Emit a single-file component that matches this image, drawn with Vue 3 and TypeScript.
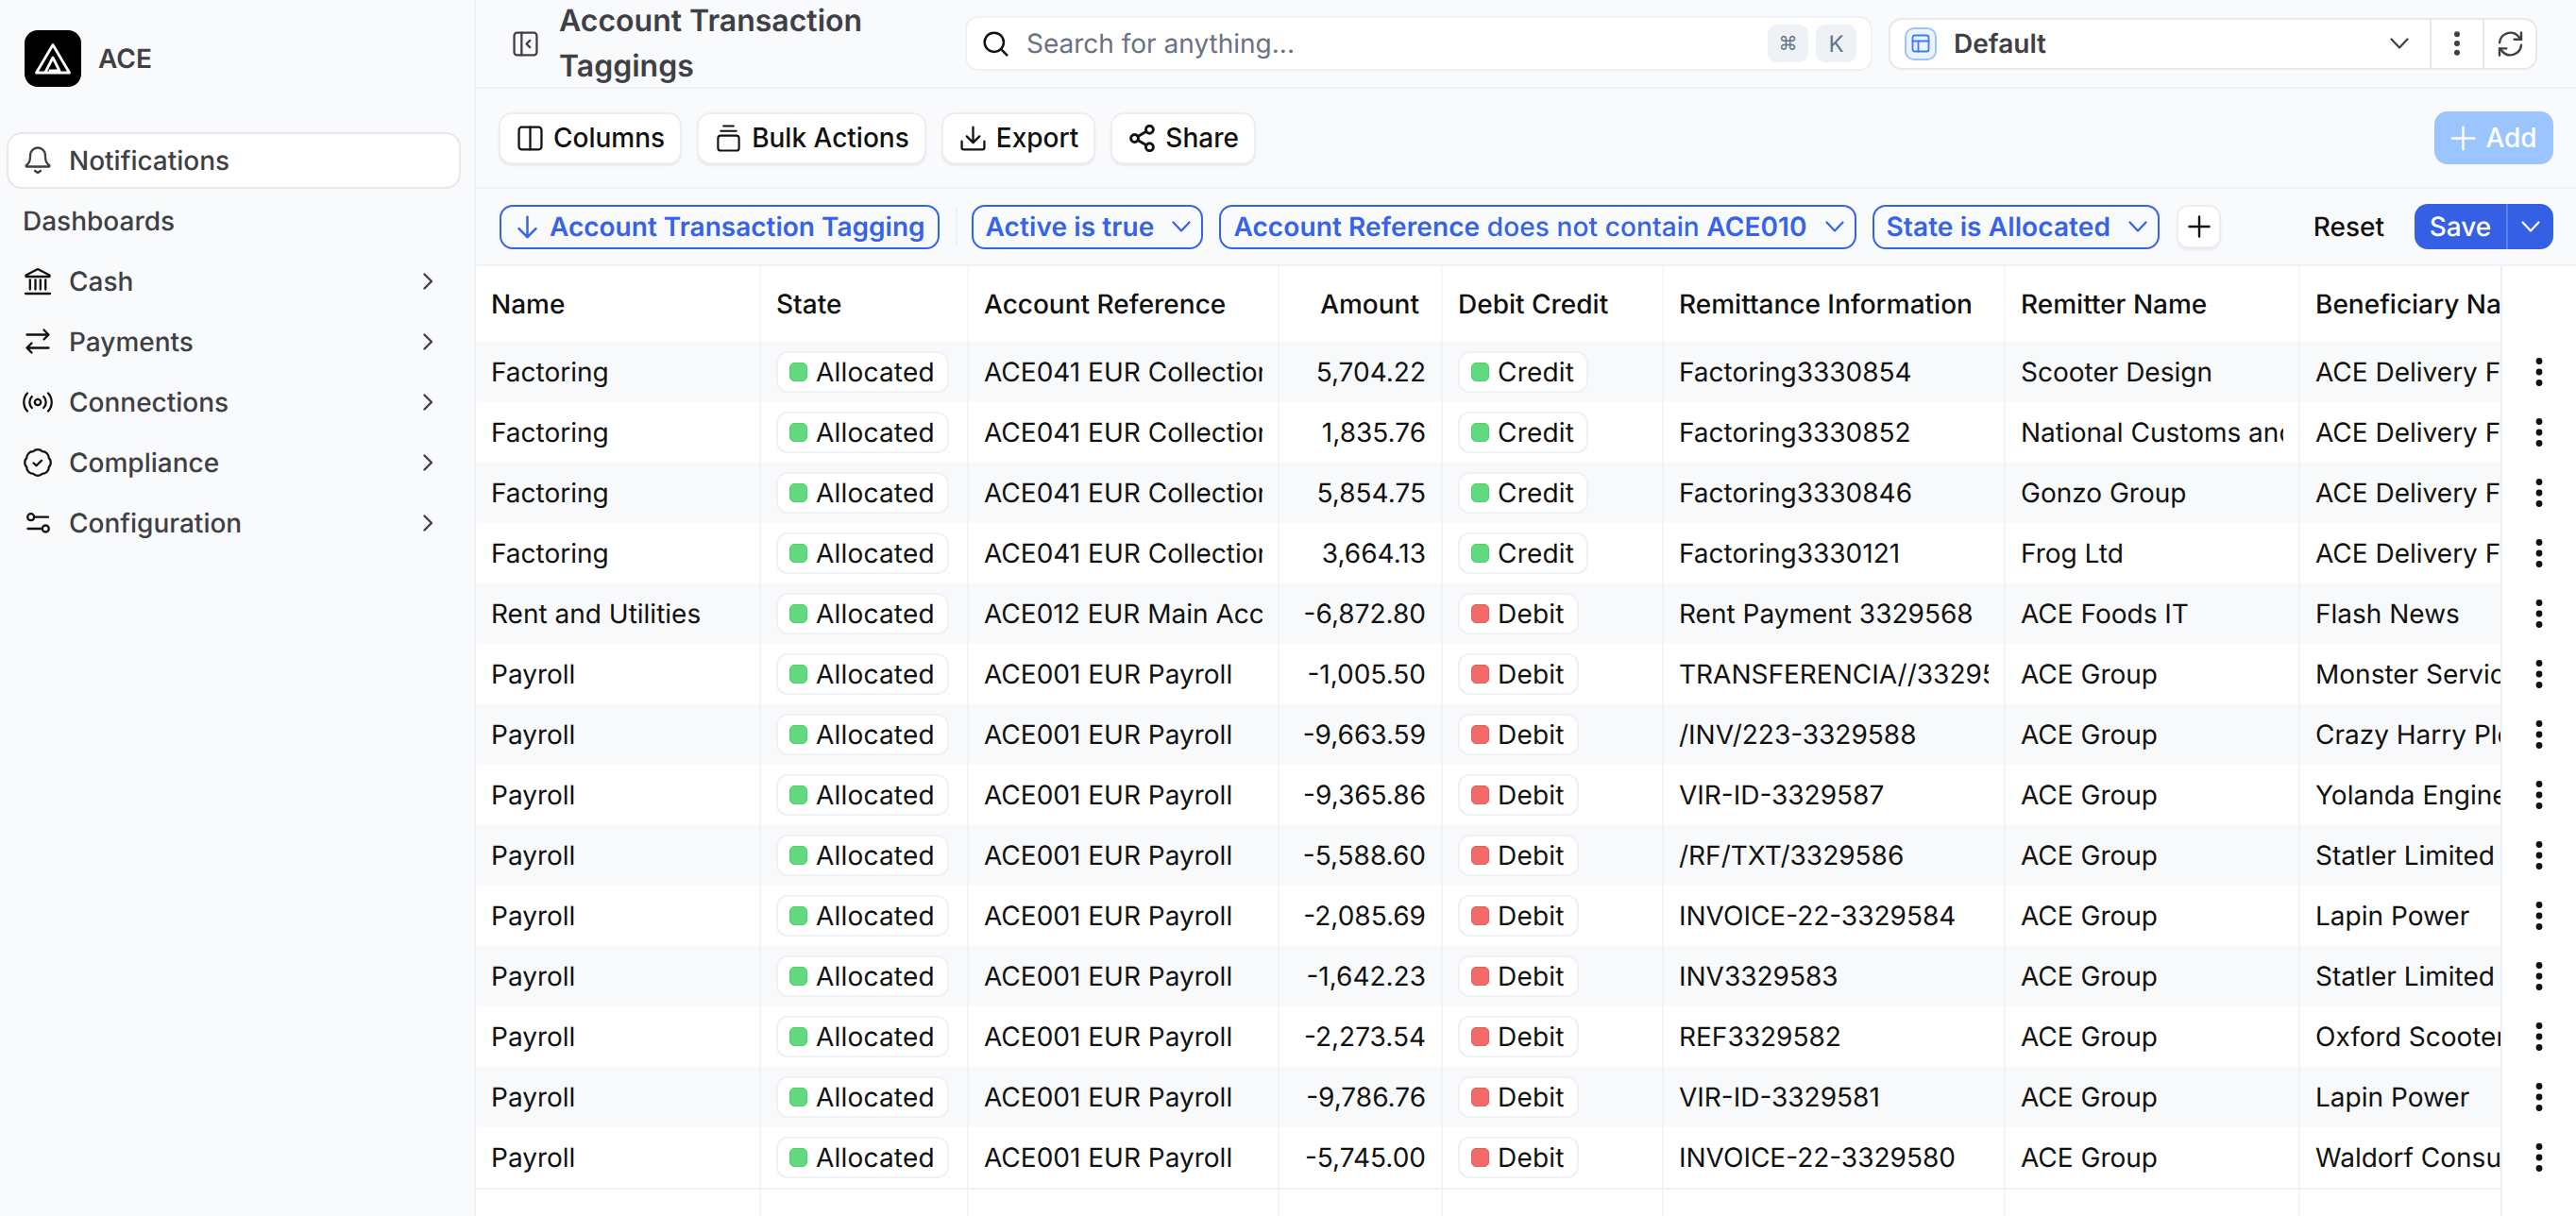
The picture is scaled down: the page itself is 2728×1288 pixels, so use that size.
<script setup lang="ts">
interface NavItem { label: string; icon: string }
interface Row { name: string; account: string; amount: string; kind: 'Credit' | 'Debit'; info: string; remitter: string; beneficiary: string }

const nav: NavItem[] = [
  { label: 'Cash', icon: '<path d="M3.500 9.500 16 3l12.500 6.500v1.500h-25z"/><path d="M7.800 14.500v10M13.500 14.500v10M18.800 14.500v10M24.200 14.500v10"/><path d="M3 29h26"/>' },
  { label: 'Payments', icon: '<path d="M4.500 8.500h23M22.500 3.500l5 5-5 5"/><path d="M27.500 22.500h-23M9.500 17.500l-5 5 5 5"/>' },
  { label: 'Connections', icon: '<circle cx="16" cy="16" r="3.200"/><path d="M9.800 10a8.500 8.500 0 0 0 0 12M22.200 10a8.500 8.500 0 0 1 0 12"/><path d="M5 6.500a14 14 0 0 0 0 19M27 6.500a14 14 0 0 1 0 19"/>' },
  { label: 'Compliance', icon: '<path d="M27.800 11.100a7 7 0 0 1 0 9.800 7 7 0 0 1-6.900 6.900 7 7 0 0 1-9.800 0 7 7 0 0 1-6.900-6.900 7 7 0 0 1 0-9.800 7 7 0 0 1 6.900-6.900 7 7 0 0 1 9.800 0 7 7 0 0 1 6.900 6.900Z"/><path d="m11.500 16.500 3 2.700 5.500-5.500"/>' },
  { label: 'Configuration', icon: '<circle cx="8.700" cy="9.700" r="3.500"/><path d="M12.500 9.700H27"/><circle cx="24.300" cy="22" r="3.500"/><path d="M5.500 22h15"/>' }
]

const accA = 'ACE041 EUR Collections Account'
const accP = 'ACE001 EUR Payroll'
const rows: Row[] = [
  { name: 'Factoring', account: accA, amount: '5,704.22', kind: 'Credit', info: 'Factoring3330854', remitter: 'Scooter Design', beneficiary: 'ACE Delivery France' },
  { name: 'Factoring', account: accA, amount: '1,835.76', kind: 'Credit', info: 'Factoring3330852', remitter: 'National Customs and Excise', beneficiary: 'ACE Delivery France' },
  { name: 'Factoring', account: accA, amount: '5,854.75', kind: 'Credit', info: 'Factoring3330846', remitter: 'Gonzo Group', beneficiary: 'ACE Delivery France' },
  { name: 'Factoring', account: accA, amount: '3,664.13', kind: 'Credit', info: 'Factoring3330121', remitter: 'Frog Ltd', beneficiary: 'ACE Delivery France' },
  { name: 'Rent and Utilities', account: 'ACE012 EUR Main Account', amount: '-6,872.80', kind: 'Debit', info: 'Rent Payment 3329568', remitter: 'ACE Foods IT', beneficiary: 'Flash News' },
  { name: 'Payroll', account: accP, amount: '-1,005.50', kind: 'Debit', info: 'TRANSFERENCIA//3329589', remitter: 'ACE Group', beneficiary: 'Monster Services' },
  { name: 'Payroll', account: accP, amount: '-9,663.59', kind: 'Debit', info: '/INV/223-3329588', remitter: 'ACE Group', beneficiary: 'Crazy Harry Plc' },
  { name: 'Payroll', account: accP, amount: '-9,365.86', kind: 'Debit', info: 'VIR-ID-3329587', remitter: 'ACE Group', beneficiary: 'Yolanda Engineering' },
  { name: 'Payroll', account: accP, amount: '-5,588.60', kind: 'Debit', info: '/RF/TXT/3329586', remitter: 'ACE Group', beneficiary: 'Statler Limited' },
  { name: 'Payroll', account: accP, amount: '-2,085.69', kind: 'Debit', info: 'INVOICE-22-3329584', remitter: 'ACE Group', beneficiary: 'Lapin Power' },
  { name: 'Payroll', account: accP, amount: '-1,642.23', kind: 'Debit', info: 'INV3329583', remitter: 'ACE Group', beneficiary: 'Statler Limited' },
  { name: 'Payroll', account: accP, amount: '-2,273.54', kind: 'Debit', info: 'REF3329582', remitter: 'ACE Group', beneficiary: 'Oxford Scooters' },
  { name: 'Payroll', account: accP, amount: '-9,786.76', kind: 'Debit', info: 'VIR-ID-3329581', remitter: 'ACE Group', beneficiary: 'Lapin Power' },
  { name: 'Payroll', account: accP, amount: '-5,745.00', kind: 'Debit', info: 'INVOICE-22-3329580', remitter: 'ACE Group', beneficiary: 'Waldorf Consulting' }
]
</script>

<template>
  <div class="app">
    <aside class="sidebar">
      <div class="brand">
        <svg class="logo" viewBox="0 0 60 60">
          <rect width="60" height="60" rx="14" fill="#000" />
          <path d="M30 15.500 12.500 45h35z" fill="none" stroke="#fff" stroke-width="2.800" />
          <path d="M22 44.500 30 29l7 14h-10" fill="none" stroke="#fff" stroke-width="2.800" />
        </svg>
        <span>ACE</span>
      </div>
      <nav class="nav">
        <a class="nav-item active">
          <svg class="ic" viewBox="0 0 32 32">
            <path d="M4 21c2-1.500 4-3 4-8.500v-2a8 8 0 0 1 16 0v2c0 5.500 2 7 4 8.500.8.600.4 1.500-.5 1.500h-23c-.9 0-1.300-.9-.5-1.500Z" />
            <path d="m13 27 3 2 3-2" />
          </svg>
          <span>Notifications</span>
        </a>
        <a class="nav-item plain"><span>Dashboards</span></a>
        <a v-for="item in nav" :key="item.label" class="nav-item">
          <svg class="ic dark" viewBox="0 0 32 32" v-html="item.icon" />
          <span class="grow">{{ item.label }}</span>
          <svg class="chev" viewBox="0 0 24 24"><path d="m8.500 4.500 7.500 7.500-7.500 7.500" /></svg>
        </a>
      </nav>
    </aside>

    <main class="main">
      <header class="topbar">
        <button class="collapse" aria-label="Collapse">
          <svg class="tool" viewBox="0 0 26 26"><rect x="1.500" y="1.500" width="23" height="23" rx="3" /><path d="M9 1.500v23M17.500 9.500 14 13l3.500 3.500" /></svg>
        </button>
        <h1 class="title">Account Transaction Taggings</h1>
        <div class="search">
          <svg class="tool black" viewBox="0 0 24 24"><circle cx="10.500" cy="10.500" r="9" /><path d="m17 17 5.500 5.500" /></svg>
          <span class="placeholder">Search for anything...</span>
          <kbd class="key sym">⌘</kbd>
          <kbd class="key">K</kbd>
        </div>
        <div class="view">
          <div class="view-main">
            <span class="view-icon">
              <svg viewBox="0 0 20 20"><rect x="1.500" y="1.500" width="17" height="17" rx="2" /><path d="M1.500 7.500h17M7.500 7.500v11" /></svg>
            </span>
            <span class="view-name">Default</span>
            <svg class="small-chev" viewBox="0 0 24 24"><path d="m3.500 7.500 8.500 9 8.500-9" /></svg>
          </div>
          <button class="view-btn" aria-label="More">
            <svg class="dots" viewBox="0 0 8 32"><circle cx="4" cy="6.300" r="3" /><circle cx="4" cy="16" r="3" /><circle cx="4" cy="25.700" r="3" /></svg>
          </button>
          <button class="view-btn" aria-label="Refresh">
            <svg class="refresh" viewBox="0 0 24 24"><path d="M2.500 11a9.500 9.500 0 0 1 16.600-5.500L21.500 8" /><path d="M21.500 2v6h-6" /><path d="M21.500 13a9.500 9.500 0 0 1-16.600 5.500L2.500 16" /><path d="M8.500 16h-6v6" /></svg>
          </button>
        </div>
      </header>

      <section class="toolbar">
        <button class="btn">
          <svg class="tool black" viewBox="0 0 26 26"><rect x="1.500" y="1.500" width="23" height="23" rx="3" /><path d="M13 1.500v23" /></svg>
          Columns
        </button>
        <button class="btn">
          <svg class="tool black tall" viewBox="0 0 26 30"><rect x="1.500" y="12" width="23" height="16.500" rx="3" /><path d="M4.500 7h17M7.500 1.500h11" /></svg>
          Bulk Actions
        </button>
        <button class="btn">
          <svg class="tool black" viewBox="0 0 26 26"><path d="M1.500 16v6.500a2 2 0 0 0 2 2h19a2 2 0 0 0 2-2V16" /><path d="M13 1.500V17M6.500 11l6.500 6.500 6.500-6.500" /></svg>
          Export
        </button>
        <button class="btn">
          <svg class="tool black tall" viewBox="2 1 20 22"><circle cx="18" cy="5" r="3" /><circle cx="6" cy="12" r="3" /><circle cx="18" cy="19" r="3" /><path d="m8.600 13.500 6.800 4M15.400 6.500l-6.800 4" /></svg>
          Share
        </button>
        <button class="add">
          <svg class="tool white" viewBox="0 0 24 24"><path d="M12 1.500v21M1.500 12h21" /></svg>
          Add
        </button>
      </section>

      <section class="filters">
        <span class="pill sort">
          <svg class="tool blue" viewBox="0 0 24 24"><path d="M12 2.500v19M4 13.500l8 8 8-8" /></svg>
          Account Transaction Tagging
        </span>
        <i class="sep"></i>
        <span class="pill">
          <b>Active is true</b>
          <svg class="small-chev blue" viewBox="0 0 24 24"><path d="m3.500 7.500 8.500 9 8.500-9" /></svg>
        </span>
        <span class="pill">
          <span><b>Account Reference</b> does not contain <b>ACE010</b></span>
          <svg class="small-chev blue" viewBox="0 0 24 24"><path d="m3.500 7.500 8.500 9 8.500-9" /></svg>
        </span>
        <span class="pill">
          <b>State is Allocated</b>
          <svg class="small-chev blue" viewBox="0 0 24 24"><path d="m3.500 7.500 8.500 9 8.500-9" /></svg>
        </span>
        <button class="plus" aria-label="Add filter">
          <svg viewBox="0 0 24 24"><path d="M12 1.500v21M1.500 12h21" /></svg>
        </button>
        <span class="reset">Reset</span>
        <div class="save">
          <span class="save-label">Save</span>
          <span class="save-more">
            <svg class="small-chev white" viewBox="0 0 24 24"><path d="m3.500 7.500 8.500 9 8.500-9" /></svg>
          </span>
        </div>
      </section>

      <section class="table-wrap">
        <div class="table">
          <div class="row head">
            <div class="cell"><span class="txt">Name</span></div>
            <div class="cell"><span class="txt">State</span></div>
            <div class="cell"><span class="txt">Account Reference</span></div>
            <div class="cell right head-amount"><span class="txt">Amount</span></div>
            <div class="cell"><span class="txt">Debit Credit</span></div>
            <div class="cell"><span class="txt">Remittance Information</span></div>
            <div class="cell"><span class="txt">Remitter Name</span></div>
            <div class="cell last"><span class="txt">Beneficiary Name</span></div>
          </div>
          <div v-for="(r, i) in rows" :key="i" class="row" :class="{ stripe: i % 2 === 0 }">
            <div class="cell"><span class="txt">{{ r.name }}</span></div>
            <div class="cell"><span class="tag"><i class="dot green"></i>Allocated</span></div>
            <div class="cell"><span class="txt">{{ r.account }}</span></div>
            <div class="cell right"><span class="txt">{{ r.amount }}</span></div>
            <div class="cell"><span class="tag"><i class="dot" :class="r.kind === 'Credit' ? 'green' : 'red'"></i>{{ r.kind }}</span></div>
            <div class="cell"><span class="txt">{{ r.info }}</span></div>
            <div class="cell"><span class="txt">{{ r.remitter }}</span></div>
            <div class="cell last"><span class="txt">{{ r.beneficiary }}</span></div>
          </div>
          <div class="row filler">
            <div class="cell" v-for="n in 8" :key="n"></div>
          </div>
        </div>
        <div class="actions">
          <div class="action-head"></div>
          <div v-for="(r, i) in rows" :key="i" class="action">
            <svg class="dots black" viewBox="0 0 8 32"><circle cx="4" cy="4.500" r="3.400" /><circle cx="4" cy="16" r="3.400" /><circle cx="4" cy="27.500" r="3.400" /></svg>
          </div>
        </div>
      </section>
    </main>
  </div>
</template>

<style>
html, body { margin: 0; padding: 0; background: #f9fafc; }
</style>

<style scoped>
.app {
  display: flex;
  width: 2728px;
  height: 1288px;
  overflow: hidden;
  background: #f9fafc;
  font-family: Inter, "Liberation Sans", sans-serif;
  font-size: 28px;
  color: #111;
  text-rendering: geometricPrecision;
}
button { font: inherit; color: inherit; background: none; border: 0; padding: 0; }
svg { display: block; flex: none; fill: none; stroke-linecap: round; stroke-linejoin: round; }

.sidebar {
  width: 504px;
  flex: none;
  box-sizing: border-box;
  border-right: 2px solid #eef1f6;
  padding: 32px 14px 0 7px;
  color: #3f3f46;
}
.brand { display: flex; align-items: center; gap: 18px; padding-left: 19px; font-weight: 600; }
.logo { width: 60px; height: 60px; }
.nav { margin-top: 48px; display: flex; flex-direction: column; gap: 4px; }
.nav-item {
  display: flex;
  align-items: center;
  height: 60px;
  box-sizing: border-box;
  padding: 0 20px 0 15px;
  gap: 17px;
  font-weight: 500;
  border: 2px solid transparent;
  border-radius: 16px;
}
.nav-item.active { background: #fff; border-color: #e7e8ee; }
.nav-item.plain { padding-left: 15px; }
.grow { flex: 1; }
.ic { width: 32px; height: 32px; stroke: #3f3f46; stroke-width: 2.300; }
.ic.dark { stroke: #111; }
.chev { width: 24px; height: 24px; stroke: #3f3f46; stroke-width: 2.400; margin-right: 1px; }

.tool { width: 27px; height: 27px; stroke: #3f3f46; stroke-width: 2.200; }
.tool.tall { height: 29px; }
.tool.black { stroke: #111; }
.tool.white { stroke: #fff; }
.tool.blue { stroke: #3563e9; }

.main { flex: 1; min-width: 0; display: flex; flex-direction: column; }

.topbar {
  height: 94px;
  flex: none;
  box-sizing: border-box;
  border-bottom: 2px solid #eef1f6;
  display: flex;
  align-items: center;
  padding: 0 41px 0 39px;
}
.collapse { width: 27px; margin-right: 22px; }
.title {
  margin: 0;
  width: 430px;
  flex: none;
  font-size: 32px;
  font-weight: 600;
  line-height: 48px;
  color: #3f3f46;
}
.search {
  width: 961px;
  flex: none;
  height: 58px;
  box-sizing: border-box;
  display: flex;
  align-items: center;
  gap: 8px;
  background: #fff;
  border: 2px solid #eef1f6;
  border-radius: 14px;
  padding: 0 15px 0 17px;
}
.placeholder { flex: 1; margin-left: 11px; color: #6b7280; }
.key {
  width: 43px;
  height: 40px;
  display: flex;
  align-items: center;
  justify-content: center;
  background: #eef1f6;
  border-radius: 10px;
  font-family: Inter, sans-serif;
  font-size: 24px;
  color: #64748b;
}
.key.sym { font-family: "DejaVu Sans", sans-serif; font-size: 20px; }
.view {
  margin-left: 17px;
  flex: 1;
  height: 55px;
  box-sizing: border-box;
  display: flex;
  align-items: stretch;
  background: #fff;
  border: 2px solid #e7e8ee;
  border-radius: 14px;
}
.view-main { flex: 1; display: flex; align-items: center; padding: 0 20px 0 15px; gap: 18px; }
.view-icon {
  width: 34px;
  height: 35px;
  box-sizing: border-box;
  display: flex;
  align-items: center;
  justify-content: center;
  background: #ecf3ff;
  border: 2px solid #9cc4ff;
  border-radius: 10px;
}
.view-icon svg { width: 20px; height: 20px; stroke: #3b7bf6; stroke-width: 1.800; }
.view-name { flex: 1; font-weight: 600; color: #3f3f46; }
.small-chev { width: 24px; height: 24px; stroke: #3f3f46; stroke-width: 2.200; }
.small-chev.blue { stroke: #3563e9; }
.small-chev.white { stroke: #fff; }
.view-btn {
  width: 56px;
  border-left: 2px solid #e7e8ee;
  display: flex;
  align-items: center;
  justify-content: center;
}
.refresh { width: 29px; height: 29px; stroke: #3f3f46; stroke-width: 2; }
.dots { width: 8px; height: 32px; fill: #3f3f46; }
.dots.black { fill: #111; }

.toolbar {
  height: 106px;
  flex: none;
  box-sizing: border-box;
  border-bottom: 2px solid #eef1f6;
  display: flex;
  align-items: center;
  gap: 16px;
  padding: 0 24px;
}
.btn {
  height: 55px;
  display: flex;
  align-items: center;
  gap: 11px;
  box-sizing: border-box;
  padding: 0 16px 0 18px;
  background: #fff;
  border: 2px solid #eceef2;
  border-radius: 14px;
  box-shadow: 0 2px 2px rgba(20, 30, 50, 0.07);
  font-weight: 500;
}
.add {
  margin-left: auto;
  height: 56px;
  width: 126px;
  display: flex;
  align-items: center;
  justify-content: center;
  gap: 10px;
  background: #9cc4ff;
  color: #fff;
  border-radius: 14px;
  font-weight: 500;
}

.filters {
  height: 82px;
  flex: none;
  box-sizing: border-box;
  border-bottom: 2px solid #eef1f6;
  display: flex;
  align-items: center;
  gap: 17px;
  padding: 0 24px 0 25px;
}
.pill {
  height: 47px;
  box-sizing: border-box;
  display: flex;
  align-items: center;
  gap: 17px;
  padding: 0 9px 0 13px;
  color: #3563e9;
  border: 2px solid #3563e9;
  border-radius: 14px;
  font-weight: 500;
  letter-spacing: 0.1px;
}
.pill b { font-weight: 600; }
.sort { font-weight: 600; padding: 0 13px 0 14px; gap: 10px; letter-spacing: 0; }
.sep { width: 2px; height: 40px; background: #eef1f6; margin-right: -2px; }
.plus {
  width: 47px;
  height: 46px;
  margin-left: 1px;
  display: flex;
  align-items: center;
  justify-content: center;
  background: #fff;
  border: 2px solid #eceef2;
  border-radius: 12px;
  box-shadow: 0 2px 2px rgba(20, 30, 50, 0.07);
  box-sizing: border-box;
}
.plus svg { width: 24px; height: 24px; stroke: #111; stroke-width: 2.400; }
.reset { margin-left: auto; font-weight: 500; margin-right: 15px; }
.save { display: flex; height: 48px; border-radius: 14px; overflow: hidden; background: #3560e3; color: #fff; font-weight: 500; }
.save-label { width: 97px; display: flex; align-items: center; justify-content: center; }
.save-more { width: 50px; border-left: 2px solid #5c80ea; box-sizing: border-box; display: flex; align-items: center; justify-content: center; }

.table-wrap { flex: 1; min-height: 0; display: flex; background: #fff; }
.table { flex: 1; min-width: 0; overflow: hidden; display: flex; flex-direction: column; }
.row {
  display: grid;
  grid-template-columns: 302px 220px 329px 173px 234px 362px 312px 300px;
  width: 2232px;
  height: 64px;
  flex: none;
}
.row.stripe { background: #f8f9fb; }
.row.head { height: 80px; font-weight: 500; }
.row.filler { flex: 1; height: auto; border-top: 2px solid #eef1f6; }
.cell {
  min-width: 0;
  box-sizing: border-box;
  border-right: 2px solid #f0f3f7;
  padding: 0 16px;
  display: flex;
  align-items: center;
  white-space: nowrap;
}
.row.head .cell { border-right-color: #f6f7fa; }
.txt { overflow: hidden; min-width: 0; line-height: 40px; }
.right { justify-content: flex-end; }
.head-amount { padding-right: 23px; }
.tag {
  height: 44px;
  box-sizing: border-box;
  display: inline-flex;
  align-items: center;
  gap: 9px;
  padding: 0 13px 0 12px;
  background: #fff;
  border: 2px solid #eef1f6;
  border-radius: 12px;
  letter-spacing: 0.2px;
}
.dot { width: 19px; height: 20px; box-sizing: border-box; border-radius: 5px; }
.dot.green { background: #62d97f; border: 1px solid #55cf73; }
.dot.red { background: #f26b6b; border: 1px solid #ea5c5c; }

.actions { width: 80px; flex: none; box-sizing: border-box; border-left: 2px solid #eef1f6; background: #fff; }
.action-head { height: 80px; }
.action { height: 64px; display: flex; align-items: center; justify-content: center; }
</style>
